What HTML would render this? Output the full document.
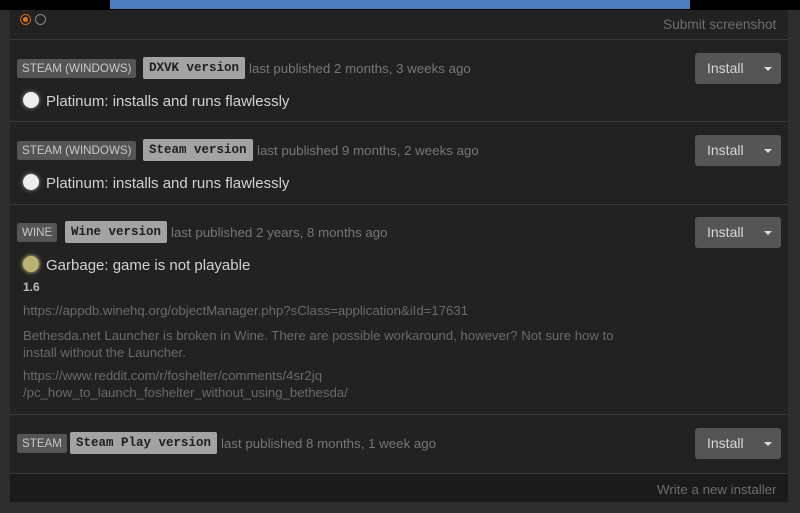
<!DOCTYPE html>
<html><head><style>
*{margin:0;padding:0;box-sizing:border-box}
body{width:800px;height:513px;background:#2d2d2d;position:relative;overflow:hidden;font-family:"Liberation Sans",sans-serif;}
.a{position:absolute;white-space:nowrap}
.panel{position:absolute;left:10px;top:0;width:778px;height:502px;background:#222}
.sep{position:absolute;left:10px;width:778px;height:1px;background:#3a3a3a}
.tag{position:absolute;height:19px;line-height:19px;background:#555;color:#c8c8c8;font-size:11.6px;padding:0 5px;border-radius:2px}
.ver{position:absolute;height:22px;line-height:22px;background:#a3a3a3;color:#1e1e1e;font-family:"Liberation Mono",monospace;font-size:12.5px;font-weight:bold;padding:0 6px;border-radius:2px}
.meta{position:absolute;color:#777;font-size:13.3px}
.btn{position:absolute;left:695px;width:86px;height:31px;background:#555;border-radius:3px;color:#d8d8d8;font-size:14px;line-height:31px;padding-left:12px}
.btn:after{content:"";position:absolute;right:9px;top:14px;border-left:4px solid transparent;border-right:4px solid transparent;border-top:4px solid #ddd}
.rate{position:absolute;left:46px;color:#d2d2d2;font-size:15px}
.dot{position:absolute;left:23px;width:16px;height:16px;border-radius:50%;background:#eee;box-shadow:0 0 4px #fff8}
.sm{position:absolute;left:23px;color:#6a6a6a;font-size:13.2px;line-height:17px}
</style></head><body>
<div class="panel"></div>
<div class="a" style="left:0;top:0;width:800px;height:10px;background:#000"></div>
<div class="a" style="left:110px;top:0;width:580px;height:9px;background:#4f7ec0"></div>
<div class="a" style="left:20px;top:14px;width:11px;height:11px;border-radius:50%;border:1px solid #c86a1e;background:#222"><div style="margin:2px;width:5px;height:5px;border-radius:50%;background:#e07820"></div></div>
<div class="a" style="left:35px;top:14px;width:11px;height:11px;border-radius:50%;border:1px solid #888"></div>
<div class="a" style="left:663px;top:17px;color:#6e6e6e;font-size:13.7px">Submit screenshot</div>
<div class="sep" style="top:39px"></div>

<div class="tag" style="left:17px;top:59px">STEAM (WINDOWS)</div>
<div class="ver" style="left:143px;top:57px">DXVK version</div>
<div class="meta" style="left:249px;top:61px">last published 2 months, 3 weeks ago</div>
<div class="btn" style="top:53px">Install</div>
<div class="dot" style="top:92px"></div>
<div class="rate" style="top:93px">Platinum: installs and runs flawlessly</div>
<div class="sep" style="top:121px"></div>

<div class="tag" style="left:17px;top:141px">STEAM (WINDOWS)</div>
<div class="ver" style="left:143px;top:139px">Steam version</div>
<div class="meta" style="left:257px;top:143px">last published 9 months, 2 weeks ago</div>
<div class="btn" style="top:135px">Install</div>
<div class="dot" style="top:174px"></div>
<div class="rate" style="top:175px">Platinum: installs and runs flawlessly</div>
<div class="sep" style="top:204px"></div>

<div class="tag" style="left:17px;top:223px">WINE</div>
<div class="ver" style="left:65px;top:221px">Wine version</div>
<div class="meta" style="left:171px;top:225px">last published 2 years, 8 months ago</div>
<div class="btn" style="top:217px">Install</div>
<div class="dot" style="top:256px;background:#b8b273;box-shadow:0 0 4px #e6e09a"></div>
<div class="rate" style="top:257px">Garbage: game is not playable</div>
<div class="a" style="left:23px;top:280px;color:#bbb;font-size:12px;font-weight:bold">1.6</div>
<div class="sm" style="top:302px">https://appdb.winehq.org/objectManager.php?sClass=application&amp;iId=17631</div>
<div class="sm" style="top:327px;white-space:nowrap">Bethesda.net Launcher is broken in Wine. There are possible workaround, however? Not sure how to<br>install without the Launcher.</div>
<div class="sm" style="top:367px;white-space:nowrap">https://www.reddit.com/r/foshelter/comments/4sr2jq<br>/pc_how_to_launch_foshelter_without_using_bethesda/</div>
<div class="sep" style="top:414px"></div>

<div class="tag" style="left:17px;top:434px">STEAM</div>
<div class="ver" style="left:70px;top:432px">Steam Play version</div>
<div class="meta" style="left:221px;top:436px">last published 8 months, 1 week ago</div>
<div class="btn" style="top:428px">Install</div>
<div class="sep" style="top:473px"></div>
<div class="a" style="left:10px;top:474px;width:778px;height:28px;background:#1b1b1b"></div>
<div class="a" style="left:657px;top:482px;color:#6e6e6e;font-size:13.3px">Write a new installer</div>
</body></html>
